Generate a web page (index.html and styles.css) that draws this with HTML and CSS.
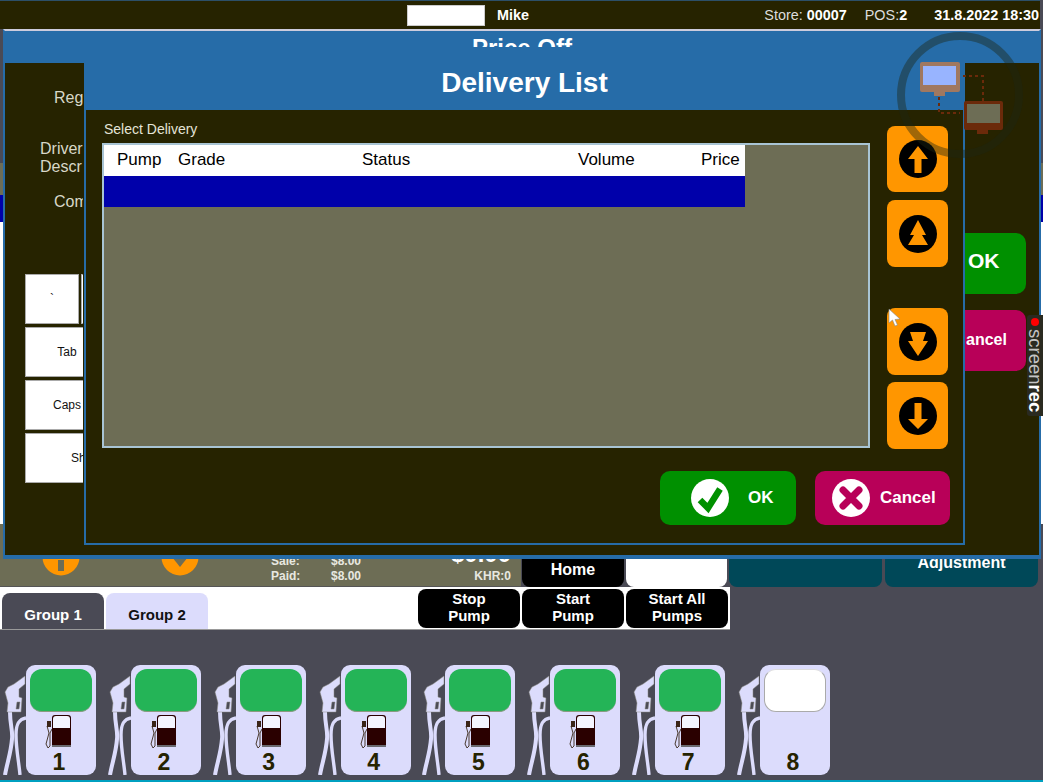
FILE: index.html
```html
<!DOCTYPE html>
<html lang="en">
<head>
<meta charset="utf-8">
<title>Delivery List</title>
<link rel="stylesheet" href="styles.css">
</head>
<body>
<svg class="defs" width="0" height="0" aria-hidden="true">
  <symbol id="nozzle" viewBox="0 0 24 110">
    <path class="hose" d="M8 47 C8 60 11 66 10 74 C9 88 5 98 3 110" stroke-width="4"/>
    <path class="hose" d="M24 53 C17 54 14 59 14 70 C14 84 17 98 18 110" stroke-width="3.4"/>
    <path class="head" fill-rule="evenodd" d="M23 11 L23 19 L17 24 L17 32 L20 33 L19 47 L5 47 L6 38 L3 27 L6 22 L12 19 Z M15 37 L14 44 L17 44 L18 37 Z"/>
  </symbol>
  <symbol id="fuel" viewBox="0 0 26 34">
    <path class="fuel-hose" d="M6 9 L2 11 L4 18 L1 29 L3 33 L5 31 L5 18 L7 14"/>
    <rect class="fuel-nozzle" x="2" y="6" width="4" height="6"/>
    <path class="fuel-body" d="M7 3 Q7 0 10 0 L23 0 Q26 0 26 3 L26 30 L7 30 Z"/>
    <path class="fuel-glass" d="M8 4 Q8 1 11 1 L22 1 Q25 1 25 4 L25 13 L8 13 Z"/>
    <rect class="fuel-base" x="7" y="30" width="19" height="2"/>
  </symbol>
</svg>

<div class="screen">
  <header class="topbar">
    <div class="topbar-box"></div>
    <b class="topbar-user">Mike</b>
    <div class="topbar-status">
      <span>Store: <b>00007</b></span>
      <span class="topbar-pos">POS:<b>2</b></span>
      <b class="topbar-date">31.8.2022 18:30</b>
    </div>
  </header>

  <main class="sale">
    <div class="sale-list">
      <div class="stripe-grey"></div>
      <div class="stripe-olive"></div>
      <div class="stripe-blue"></div>
      <div class="stripe-white"></div>
    </div>
    <div class="totals">
      <div class="totals-left">
        <svg class="scroll-dot dot-up" viewBox="-19 -19 38 38"><circle r="18.5" class="dot"/><rect x="-3" y="3" width="6" height="11" class="dot-mark"/></svg>
        <svg class="scroll-dot dot-down" viewBox="-19 -19 38 38"><circle r="18.5" class="dot"/><path d="M-8 0 L0 10 L8 0 Z" class="dot-mark"/></svg>
        <div class="money">
          <span>Sale:</span><span>$8.00</span>
          <span>Paid:</span><span>$8.00</span>
        </div>
        <div class="balance">
          <b class="balance-main">$0.00</b>
          <span class="balance-khr">KHR:0</span>
        </div>
      </div>
      <div class="home-btn">Home</div>
      <div class="blank-btn"></div>
      <div class="teal-btn teal-wide"></div>
      <div class="teal-btn teal-wide">Adjustment</div>
    </div>
  </main>

  <section class="tabs-row">
    <div class="tabs-strip">
      <div class="tab tab-active">Group 1</div>
      <div class="tab">Group 2</div>
      <div class="actions">
        <div class="action">Stop<br>Pump</div>
        <div class="action">Start<br>Pump</div>
        <div class="action">Start All<br>Pumps</div>
      </div>
    </div>
  </section>

  <section class="pumps">
    <div class="pump"><svg class="nozzle"><use href="#nozzle"/></svg><div class="pump-card"><div class="pump-display"></div><svg class="fuel"><use href="#fuel"/></svg><div class="pump-num">1</div></div></div>
    <div class="pump"><svg class="nozzle"><use href="#nozzle"/></svg><div class="pump-card"><div class="pump-display"></div><svg class="fuel"><use href="#fuel"/></svg><div class="pump-num">2</div></div></div>
    <div class="pump"><svg class="nozzle"><use href="#nozzle"/></svg><div class="pump-card"><div class="pump-display"></div><svg class="fuel"><use href="#fuel"/></svg><div class="pump-num">3</div></div></div>
    <div class="pump"><svg class="nozzle"><use href="#nozzle"/></svg><div class="pump-card"><div class="pump-display"></div><svg class="fuel"><use href="#fuel"/></svg><div class="pump-num">4</div></div></div>
    <div class="pump"><svg class="nozzle"><use href="#nozzle"/></svg><div class="pump-card"><div class="pump-display"></div><svg class="fuel"><use href="#fuel"/></svg><div class="pump-num">5</div></div></div>
    <div class="pump"><svg class="nozzle"><use href="#nozzle"/></svg><div class="pump-card"><div class="pump-display"></div><svg class="fuel"><use href="#fuel"/></svg><div class="pump-num">6</div></div></div>
    <div class="pump"><svg class="nozzle"><use href="#nozzle"/></svg><div class="pump-card"><div class="pump-display"></div><svg class="fuel"><use href="#fuel"/></svg><div class="pump-num">7</div></div></div>
    <div class="pump"><svg class="nozzle"><use href="#nozzle"/></svg><div class="pump-card"><div class="pump-display pump-display-idle"></div><div class="fuel-gap"></div><div class="pump-num">8</div></div></div>
  </section>
  <div class="bottom-line"></div>

  <!-- Price Off window -->
  <section class="win-price">
    <h2 class="win-price-title">Price Off</h2>
    <div class="win-price-body">
      <div class="price-left">
        <div class="lbl lbl-reg">Reg</div>
        <div class="lbl lbl-driver">Driver<br>Descr</div>
        <div class="lbl lbl-com">Com</div>
        <div class="keys">
          <div class="key-row"><div class="key key-std">`</div><div class="key key-std"></div></div>
          <div class="key-row"><div class="key key-tab">Tab</div></div>
          <div class="key-row"><div class="key key-tab">Caps</div></div>
          <div class="key-row"><div class="key key-shift">Sh</div></div>
        </div>
      </div>
      <div class="price-right">
        <div class="side-btn side-ok">OK</div>
        <div class="side-btn side-cancel">ancel</div>
      </div>
    </div>
  </section>

  <!-- Delivery List window -->
  <section class="win-delivery">
    <h1 class="win-delivery-title">Delivery List</h1>
    <div class="win-delivery-body">
      <div class="delivery-main">
        <div class="delivery-left">
          <div class="select-label">Select Delivery</div>
          <div class="grid-box">
            <div class="grid-head">
              <span>Pump</span>
              <span>Grade</span>
              <span>Status</span>
              <span>Volume</span>
              <span>Price</span>
            </div>
            <div class="grid-selected"></div>
          </div>
        </div>
        <div class="scrollers">
          <div class="scroller"><svg class="scroll-icon" viewBox="-19 -19 38 38"><circle r="19"/><path class="arrow" d="M0 -13 L10 0 L3.5 0 L3.5 14 L-3.5 14 L-3.5 0 L-10 0 Z"/></svg></div>
          <div class="scroller scroller-tall"><svg class="scroll-icon" viewBox="-19 -19 38 38"><circle r="19"/><path class="arrow" d="M0 -14 L8 1 L4 1 L10 11 L-10 11 L-4 1 L-8 1 Z"/></svg></div>
          <div class="scroller scroller-tall scroller-split"><svg class="scroll-icon" viewBox="-19 -19 38 38"><circle r="19"/><path class="arrow" d="M-8 -10 L8 -10 L5 -1 L10 -1 L0 14 L-10 -1 L-5 -1 Z"/></svg></div>
          <div class="scroller scroller-tall scroller-last"><svg class="scroll-icon" viewBox="-19 -19 38 38"><circle r="19"/><path class="arrow" d="M0 13 L10 3 L3.5 3 L3.5 -13 L-3.5 -13 L-3.5 3 L-10 3 Z"/></svg></div>
        </div>
      </div>
      <div class="delivery-actions">
        <div class="dlg-btn dlg-ok">
          <svg class="dlg-icon" viewBox="-19 -19 38 38"><circle r="19" class="dlg-disc"/><path class="check" d="M-10 2 L-2 10 L10 -9"/></svg>
          <span>OK</span>
        </div>
        <div class="dlg-btn dlg-cancel">
          <svg class="dlg-icon" viewBox="-19 -19 38 38"><circle r="19" class="dlg-disc"/><path class="cross" d="M-8 -8 L8 8 M8 -8 L-8 8"/></svg>
          <span>Cancel</span>
        </div>
      </div>
    </div>
  </section>

  <!-- translucent logo watermark -->
  <svg class="watermark" viewBox="0 0 160 150" aria-hidden="true">
    <circle class="wm-ring" cx="64" cy="66" r="59"/>
    <path class="wm-dots" d="M67 47 H87 V72 M43 68 V84 H64"/>
    <rect class="wm-mon1" x="24" y="33" width="40" height="30" rx="2"/>
    <rect class="wm-mon1" x="38" y="63" width="11" height="4"/>
    <rect class="wm-scr1" x="27" y="37" width="33" height="19"/>
    <rect class="wm-mon2" x="68" y="72" width="39" height="29" rx="2"/>
    <rect class="wm-mon2" x="81" y="101" width="11" height="4"/>
    <rect class="wm-scr2" x="71" y="75" width="33" height="19"/>
  </svg>

  <!-- recorder tag -->
  <aside class="rec-tag">
    <span class="rec-dot"></span>
    <span class="rec-text">screen<b>rec</b></span>
  </aside>

  <!-- mouse pointer -->
  <svg class="pointer" viewBox="0 0 14 20" aria-hidden="true"><path d="M1 1 L1 15 L4.5 12 L7 18 L9.5 17 L7 11.5 L12 11 Z"/></svg>
</div>
</body>
</html>
```

FILE: styles.css
```css
* { box-sizing: border-box; }
html, body { margin: 0; padding: 0; }
body {
  width: 1043px;
  height: 782px;
  overflow: hidden;
  background: #4a4a55;
  font-family: "Liberation Sans", Arial, sans-serif;
}
.defs { position: absolute; }
.screen { position: relative; width: 1043px; height: 782px; overflow: hidden; }

/* top bar */
.topbar {
  height: 29px;
  width: 1040px;
  display: flex;
  align-items: center;
  background: #262300;
  border-top: 1px solid #2c4f68;
  color: #fff;
  font-size: 14.4px;
}
.topbar-box { width: 78px; height: 21px; margin-left: 407px; background: #fff; border: 1px solid #ccc; }
.topbar-user { margin-left: 12px; }
.topbar-status { margin-left: auto; display: flex; color: #ddd; }
.topbar-status b { color: #fff; }
.topbar-pos { margin-left: 18px; }
.topbar-date { margin-left: 27px; margin-right: 1px; }

/* page behind the dialogs */
.sale { height: 558px; display: flex; flex-direction: column; }
.sale-list { height: 495px; display: flex; flex-direction: column; }
.stripe-grey { height: 134px; }
.stripe-olive { height: 32px; background: #6d6d55; }
.stripe-blue { height: 27px; background: #0000aa; }
.stripe-white { height: 302px; background: #fff; }
.totals { height: 63px; display: flex; color: #fff; font-weight: bold; }
.totals-left {
  width: 521px;
  margin-right: 1px;
  background: #6d6d55;
  display: flex;
  align-items: flex-start;
  border-bottom: 1px solid #555;
}
.scroll-dot { width: 38px; height: 38px; margin-top: 14px; flex: none; }
.dot-up { margin-left: 42px; }
.dot-down { margin-left: 81px; }
.dot { fill: #ff9600; }
.dot-mark { fill: #6d6d55; }
.money {
  margin: 30px 0 0 72px;
  display: grid;
  grid-template-columns: 60px 40px;
  font-size: 12px;
  line-height: 15px;
  color: #e8e8e0;
}
.balance { margin-left: auto; padding-right: 10px; display: flex; flex-direction: column; align-items: flex-end; padding-top: 18px; }
.balance-main { font-size: 24px; line-height: 24px; }
.balance-khr { font-size: 12px; line-height: 15px; margin-top: 3px; color: #e8e8e0; }
.home-btn {
  width: 102px; margin-right: 2px;
  background: #000; border-radius: 0 0 8px 8px;
  font-size: 16px; text-align: center; padding-top: 37px;
}
.blank-btn { width: 101px; margin-right: 2px; background: #fff; border-radius: 0 0 8px 8px; }
.teal-btn { background: #004858; border-radius: 0 0 8px 8px; text-align: center; font-size: 16px; padding-top: 30px; }
.teal-wide { width: 153px; margin-right: 3px; }

/* tabs */
.tabs-row { height: 43px; }
.tabs-strip {
  width: 730px; height: 43px;
  background: #fff;
  display: flex; align-items: flex-end;
  padding-left: 2px;
  border-bottom: 1px solid #999;
}
.tab {
  width: 102px; height: 36px; margin-right: 2px;
  background: #dcdcfc; color: #111;
  border-radius: 8px 8px 0 0;
  display: flex; align-items: center; justify-content: center;
  padding-top: 7px;
  font-size: 15px; font-weight: bold;
}
.tab-active { background: #4a4a55; color: #fff; }
.actions { margin-left: auto; display: flex; gap: 2px; align-self: flex-start; padding: 2px 2px 0 0; }
.action {
  width: 102px; height: 39px;
  background: #000; color: #fff;
  border-radius: 8px;
  font-size: 15px; font-weight: bold; line-height: 17px;
  text-align: center; padding-top: 1px;
}

/* pumps */
.pumps {
  height: 150px;
  padding: 35px 0 0 2px;
  display: grid;
  grid-template-columns: repeat(8, 104.86px);
}
.pump { display: flex; align-items: flex-start; }
.nozzle { width: 24px; height: 110px; flex: none; }
.hose { fill: none; stroke: #dcdcfc; stroke-linecap: butt; }
.head { fill: #dcdcfc; stroke: #8a8a80; stroke-width: .5; }
.pump-card {
  width: 70px; height: 110px;
  background: #dcdcfc;
  border-radius: 9px;
  padding: 4px;
  display: flex; flex-direction: column;
}
.pump-display {
  height: 43px;
  background: #24b457;
  border-radius: 12px;
  border-bottom: 1px solid #8a9a80;
  flex: none;
}
.pump-display-idle { background: #fff; border: 1px solid #aaa; border-top-color: #ddd; }
.fuel { width: 26px; height: 34px; margin: 3px 0 0 15px; flex: none; }
.fuel-gap { height: 37px; flex: none; }
.fuel-hose { fill: none; stroke: #4a3a30; stroke-width: 1; }
.fuel-nozzle { fill: #3a2418; }
.fuel-body { fill: #2a0000; }
.fuel-glass { fill: #f4f4ff; }
.fuel-base { fill: #6a6a70; }
.pump-num {
  margin-top: 1px;
  text-align: center;
  margin-right: 4px;
  font-size: 23px;
  font-weight: bold;
  line-height: 24px;
  color: #262300;
}
.bottom-line { height: 2px; background: #00a0c0; }

/* Price Off window */
.win-price {
  position: absolute;
  left: 3px; top: 29px;
  width: 1038px; height: 530px;
  background: #266ca8;
  border: 2px solid #266ca8;
  border-top: 2px solid #ccd;
  border-bottom-width: 4px;
  display: flex; flex-direction: column;
}
.win-price-title {
  margin: 0; height: 32px;
  color: #fff;
  font-size: 24px; line-height: 34px; font-weight: bold;
  text-align: center;
}
.win-price-body {
  flex: 1;
  display: flex; justify-content: space-between;
  min-height: 0;
  background: #262300;
}
.price-left {
  width: 78px;
  background: #262300;
  overflow: hidden;
  padding-top: 26px;
  color: #d8d8c8;
}
.lbl { font-size: 16px; line-height: 18px; white-space: nowrap; }
.lbl-reg { margin-left: 49px; }
.lbl-driver { margin: 33px 0 0 35px; }
.lbl-com { margin: 17px 0 0 49px; }
.keys { margin: 63px 0 0 20px; display: flex; flex-direction: column; gap: 3px; width: 200px; }
.key-row { display: flex; gap: 2px; }
.key {
  height: 50px;
  background: #fff;
  border: 1px solid #aaa;
  color: #111;
  font-size: 12px;
  display: flex; align-items: center; justify-content: center;
  flex: none;
}
.key-std { width: 54px; }
.key-tab { width: 84px; }
.key-shift { width: 116px; justify-content: flex-start; padding-left: 45px; }
.price-right { width: 74px; background: #262300; padding-top: 170px; }
.side-btn {
  width: 61px; height: 61px;
  border-radius: 0 10px 10px 0;
  color: #fff; font-weight: bold;
  display: flex; align-items: center;
  padding-left: 3px;
}
.side-ok { background: #009000; font-size: 21px; padding-bottom: 5px; }
.side-cancel { background: #b80058; font-size: 16px; margin-top: 16px; padding-left: 1px; padding-bottom: 2px; }

/* Delivery List window */
.win-delivery {
  position: absolute;
  left: 84px; top: 47px;
  width: 881px; height: 498px;
  background: #266ca8;
  border: 2px solid #266ca8;
  display: flex; flex-direction: column;
}
.win-delivery-title {
  margin: 0; height: 61px; flex: none;
  color: #fff;
  font-size: 28px; line-height: 67px; font-weight: bold;
  text-align: center;
}
.win-delivery-body {
  flex: 1;
  background: #262300;
  padding: 9px 13px 0 16px;
  display: flex; flex-direction: column;
}
.delivery-main { display: flex; gap: 17px; }
.select-label { color: #e4e4d8; font-size: 14px; line-height: 20px; margin: 0 0 4px 2px; }
.grid-box {
  width: 768px; height: 305px;
  background: #6d6d55;
  border: 2px solid #a8c4d4;
}
.grid-head {
  width: 641px; height: 31px;
  background: #fff;
  display: grid;
  grid-template-columns: 61px 184px 216px 123px 41px;
  padding: 0 0 2px 13px;
  align-items: center;
  color: #000;
  font-size: 17px;
}
.grid-selected { width: 641px; height: 31px; background: #0000aa; }
.scrollers { display: flex; flex-direction: column; padding-top: 7px; }
.scroller {
  width: 61px; height: 66px;
  background: #ff9600;
  border-radius: 8px;
  display: flex; align-items: center; justify-content: center;
}
.scroller-tall { height: 67px; margin-top: 8px; }
.scroller-split { margin-top: 41px; }
.scroller-last { margin-top: 7px; }
.scroll-icon { width: 38px; height: 38px; }
.arrow { fill: #ff9600; }
.delivery-actions { display: flex; justify-content: flex-end; gap: 19px; margin-top: 22px; }
.dlg-btn {
  height: 54px; border-radius: 10px;
  color: #fff; font-size: 17px; font-weight: bold;
  display: flex; align-items: center;
}
.dlg-ok { width: 136px; background: #009000; padding-left: 31px; gap: 19px; }
.dlg-cancel { width: 135px; background: #b80058; padding-left: 17px; gap: 10px; }
.dlg-icon { width: 38px; height: 38px; flex: none; }
.dlg-disc { fill: #fff; }
.check { fill: none; stroke: #009000; stroke-width: 6.5; stroke-linejoin: miter; }
.cross { fill: none; stroke: #b80058; stroke-width: 7; stroke-linecap: round; }

/* watermark */
.watermark { position: absolute; left: 896px; top: 29px; width: 160px; height: 150px; }
.wm-ring { fill: none; stroke: rgba(28, 38, 20, .42); stroke-width: 8; }
.wm-dots { fill: none; stroke: #6b2a0a; stroke-width: 2; stroke-dasharray: 3 3; }
.wm-mon1 { fill: #a07860; }
.wm-scr1 { fill: #98b4ff; }
.wm-mon2 { fill: #6b2a0a; }
.wm-scr2 { fill: #6d6d55; }

/* recorder tag */
.rec-tag {
  position: absolute;
  left: 1027px; top: 315px;
  width: 16px; height: 101px;
  background: #2a2a20;
  border-radius: 3px 0 0 3px;
  display: flex; flex-direction: column; align-items: center;
  padding-top: 3px;
}
.rec-dot { width: 8px; height: 8px; border-radius: 50%; background: #f00; flex: none; }
.rec-text {
  writing-mode: vertical-rl;
  color: #c4c4c4;
  font-size: 18.5px;
  line-height: 16px;
  margin-top: 3px;
  white-space: nowrap;
}
.rec-text b { color: #fff; }

/* pointer */
.pointer { position: absolute; left: 888px; top: 308px; width: 14px; height: 20px; }
.pointer path { fill: #fff; stroke: #888; stroke-width: .6; }
```
